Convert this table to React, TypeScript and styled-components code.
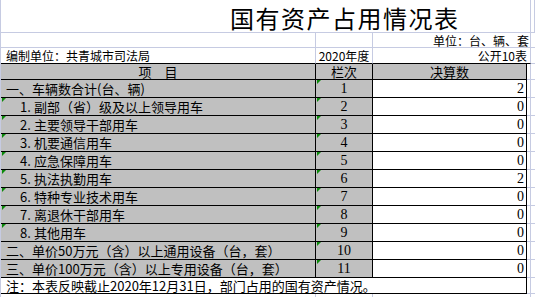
import styled, { createGlobalStyle } from "styled-components";

const GRID = "#c6cbe2";
const GRAY = "#c0c0c0";

const rows = [
  { pre: "", label: "一、车辆数合计(台、辆)", no: "1", val: "2", mark: false },
  { pre: "1.", label: "副部（省）级及以上领导用车", no: "2", val: "0", mark: true },
  { pre: "2.", label: "主要领导干部用车", no: "3", val: "0", mark: true },
  { pre: "3.", label: "机要通信用车", no: "4", val: "0", mark: true },
  { pre: "4.", label: "应急保障用车", no: "5", val: "0", mark: true },
  { pre: "5.", label: "执法执勤用车", no: "6", val: "2", mark: true },
  { pre: "6.", label: "特种专业技术用车", no: "7", val: "0", mark: true },
  { pre: "7.", label: "离退休干部用车", no: "8", val: "0", mark: true },
  { pre: "8.", label: "其他用车", no: "9", val: "0", mark: true },
  { pre: "", label: "二、单价50万元（含）以上通用设备（台，套）", no: "10", val: "0", mark: false },
  { pre: "", label: "三、单价100万元（含）以上专用设备（台，套）", no: "11", val: "0", mark: false },
];

function App() {
  return (
    <>
      <GlobalStyle />
      <Sheet>
        <Row $h={33}>
          <Title>国有资产占用情况表</Title>
          <Cell $rb={GRID} $bb={GRID} />
        </Row>

        <Row $h={15}>
          <Cell $rb={GRID} $bb={GRID} />
          <Cell $rb={GRID} $bb={GRID} />
          <Cell $span={2} $rb={GRID} $bb={GRID} $justify="flex-end" $small>
            单位：台、辆、套
          </Cell>
          <Cell $bb={GRID} />
        </Row>

        <Row $h={16}>
          <Cell $rb={GRID} $bb="#000" $pad="0 0 1px 5px" $small>
            编制单位：共青城市司法局
          </Cell>
          <Cell $rb={GRID} $bb="#000" $justify="center" $pad="0 0 1px 0" $small>
            2020年度
          </Cell>
          <Cell $span={2} $rb={GRID} $bb="#000" $justify="flex-end" $small $pad="0 3px 1px 0">
            公开10表
          </Cell>
          <Cell $bb={GRID} />
        </Row>

        <Row $h={16}>
          <Cell $bg={GRAY} $rb="#000" $bb="#000" $justify="center" $mid>
            项　目
          </Cell>
          <Cell $bg={GRAY} $rb="#000" $bb="#000" $justify="center" $mid>
            栏次
          </Cell>
          <Cell $bg={GRAY} $rb="#000" $bb="#000" $justify="center" $mid>
            决算数
          </Cell>
          <Cell $rb={GRID} $bb={GRID} />
          <Cell $bb={GRID} />
        </Row>

        {rows.map((r) => (
          <Row $h={18} key={r.no}>
            <Cell
              $bg={GRAY}
              $rb="#000"
              $bb="#000"
              $mark={r.mark}
              $mid
              $pad={r.pre ? "0 0 0 19px" : "0 0 0 5px"}
            >
              {r.pre && <Prefix>{r.pre}</Prefix>}
              {r.label}
            </Cell>
            <Cell $bg={GRAY} $rb="#000" $bb="#000" $justify="center" $mark $mid>
              <Num>{r.no}</Num>
            </Cell>
            <Cell $rb="#000" $bb="#000" $justify="flex-end" $mid $pad="0 2px 0 0">
              <Num>{r.val}</Num>
            </Cell>
            <Cell $rb={GRID} $bb={GRID} />
            <Cell $bb={GRID} />
          </Row>
        ))}

        <Row $h={16}>
          <Note>注：本表反映截止2020年12月31日，部门占用的国有资产情况。</Note>
          <Cell $rb={GRID} $bb={GRID} />
          <Cell $bb={GRID} />
        </Row>

        <Row $h={12}>
          <Cell $rb={GRID} />
          <Cell $rb={GRID} />
          <Cell $span={2} $rb={GRID} />
          <Cell />
        </Row>
      </Sheet>
    </>
  );
}

export default App;

const GlobalStyle = createGlobalStyle`
  html, body {
    margin: 0;
    padding: 0;
    background: #ffffff;
  }
`;

const Sheet = styled.div`
  width: 535px;
  height: 297px;
  overflow: hidden;
  background: #ffffff;
  color: #000;
  font-family: "Noto Sans CJK SC", "Liberation Sans", sans-serif;
  font-size: 13px;
  border-left: 1px solid ${GRID};
  box-sizing: border-box;
`;

const Row = styled.div<{ $h: number }>`
  display: grid;
  grid-template-columns: 315px 57px 154px 4px 1fr;
  height: ${(p) => p.$h}px;
`;

const Cell = styled.div<{
  $bg?: string;
  $rb?: string;
  $bb?: string;
  $justify?: string;
  $pad?: string;
  $span?: number;
  $mark?: boolean;
  $small?: boolean;
  $mid?: boolean;
}>`
  position: relative;
  box-sizing: border-box;
  display: flex;
  align-items: ${(p) => (p.$mid ? "center" : "flex-end")};
  justify-content: ${(p) => p.$justify || "flex-start"};
  padding: ${(p) => p.$pad || "0 1px"};
  background: ${(p) => p.$bg || "transparent"};
  border-right: ${(p) => (p.$rb ? `1px solid ${p.$rb}` : "none")};
  border-bottom: ${(p) => (p.$bb ? `1px solid ${p.$bb}` : "none")};
  grid-column: span ${(p) => p.$span || 1};
  font-size: ${(p) => (p.$small ? "12px" : "13px")};
  line-height: 13px;
  white-space: nowrap;
  min-width: 0;

  &::before {
    content: "";
    display: ${(p) => (p.$mark ? "block" : "none")};
    position: absolute;
    top: 0;
    left: 1px;
    border-top: 4px solid #0a8a0a;
    border-right: 4px solid transparent;
  }
`;

const Prefix = styled.span`
  display: inline-block;
  width: 14px;
`;

const Title = styled.div`
  grid-column: span 4;
  box-sizing: border-box;
  display: flex;
  align-items: center;
  padding: 4px 0 0 229px;
  border-right: 1px solid ${GRID};
  border-bottom: 1px solid ${GRID};
  font-size: 24px;
  line-height: 26px;
  letter-spacing: 1.5px;
  white-space: nowrap;
`;

const Note = styled.div`
  grid-column: span 3;
  box-sizing: border-box;
  display: flex;
  align-items: center;
  padding-left: 5px;
  margin-left: -1px;
  border-left: 1px solid #000;
  border-right: 1px solid #000;
  border-bottom: 1px solid #000;
  font-size: 13px;
  line-height: 13px;
  white-space: nowrap;
`;

const Num = styled.span`
  font-family: "Liberation Serif", "Noto Sans CJK SC", serif;
  font-size: 14px;
  line-height: 13px;
`;
